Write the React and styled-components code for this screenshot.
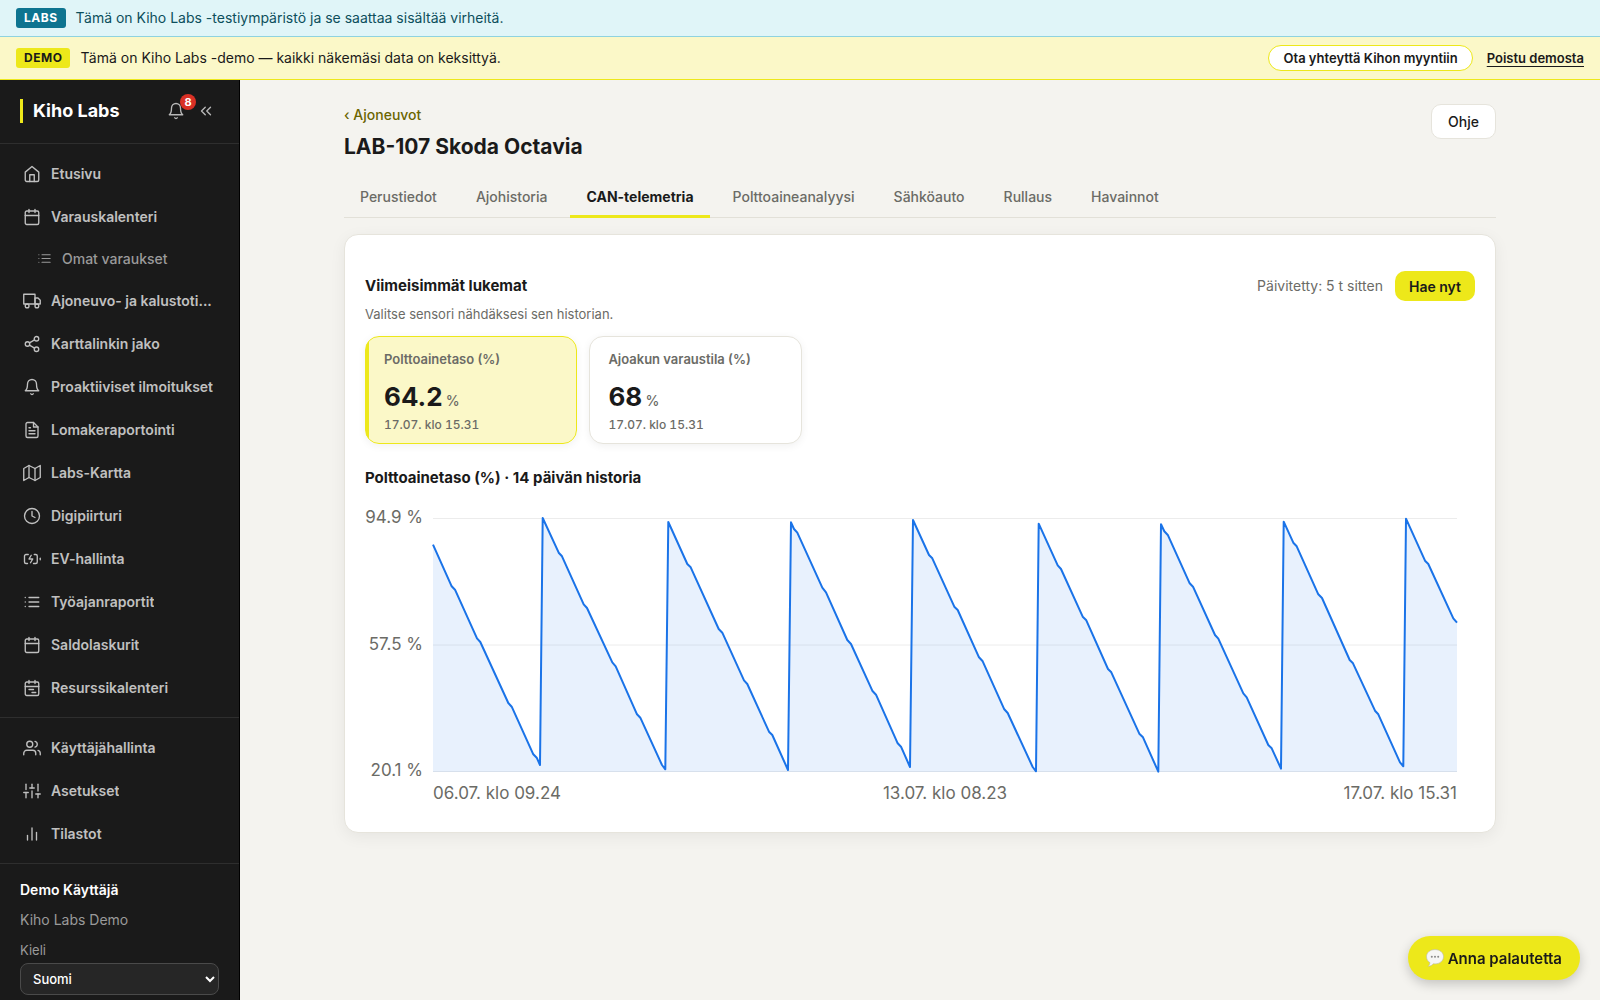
import React from "react";
import styled, { createGlobalStyle } from "styled-components";
import {
  FiBell,
  FiBarChart2,
  FiCalendar,
  FiChevronsLeft,
  FiClock,
  FiFileText,
  FiList,
  FiMap,
  FiShare2,
  FiSliders,
  FiTruck,
  FiUsers
} from "react-icons/fi";

const svgProps = {
  viewBox: "0 0 24 24",
  fill: "none",
  stroke: "currentColor",
  strokeWidth: 2,
  strokeLinecap: "round",
  strokeLinejoin: "round",
  "aria-hidden": true
};

const HomeIcon = () => (
  <svg {...svgProps}>
    <path d="M3 9.500 12 2l9 7.500V20a2 2 0 0 1-2 2H5a2 2 0 0 1-2-2z" />
    <path d="M9 22V13h6v9" />
  </svg>
);

const BatteryIcon = () => (
  <svg {...svgProps}>
    <path d="M7 6H4a2 2 0 0 0-2 2v8a2 2 0 0 0 2 2h2" />
    <path d="M15 6h2a2 2 0 0 1 2 2v8a2 2 0 0 1-2 2h-3" />
    <path d="m11 7-3 5h5l-3 5" />
    <path d="M23 11v2" />
  </svg>
);

const ScheduleIcon = () => (
  <svg {...svgProps}>
    <rect x="3" y="4" width="18" height="18" rx="2" />
    <path d="M8 2v4M16 2v4M3 10h18M8 14h6M12 18h5" />
  </svg>
);

const mainLinks = [
  { label: "Etusivu", icon: HomeIcon },
  { label: "Varauskalenteri", icon: FiCalendar },
  { label: "Omat varaukset", icon: FiList, sub: true },
  { label: "Ajoneuvo- ja kalustoti...", icon: FiTruck },
  { label: "Karttalinkin jako", icon: FiShare2 },
  { label: "Proaktiiviset ilmoitukset", icon: FiBell },
  { label: "Lomakeraportointi", icon: FiFileText },
  { label: "Labs-Kartta", icon: FiMap },
  { label: "Digipiirturi", icon: FiClock },
  { label: "EV-hallinta", icon: BatteryIcon },
  { label: "Työajanraportit", icon: FiList },
  { label: "Saldolaskurit", icon: FiCalendar },
  { label: "Resurssikalenteri", icon: ScheduleIcon }
];

const adminLinks = [
  { label: "Käyttäjähallinta", icon: FiUsers },
  { label: "Asetukset", icon: FiSliders },
  { label: "Tilastot", icon: FiBarChart2 }
];

const tabs = [
  "Perustiedot",
  "Ajohistoria",
  "CAN-telemetria",
  "Polttoaineanalyysi",
  "Sähköauto",
  "Rullaus",
  "Havainnot"
];

const sensors = [
  { name: "Polttoainetaso (%)", value: "64.2", time: "17.07. klo 15.31" },
  { name: "Ajoakun varaustila (%)", value: "68", time: "17.07. klo 15.31" }
];

// fuel level, chart units: one line per tank
const linePoints = [
  "68,44.7 86.7,86.3 90,89.7 112,138.3 115.3,142 143.3,203 146.7,206.7 168.3,254.3 171.7,257.7 175,265",
  "177.7,18 193.7,52.7 197,56.3 218.7,104.3 222,108 247.3,162.3 250.7,166.3 272,214.3 275.3,217.7 297,265 300.3,269.3",
  "303.3,22 322.3,64 325.7,67.3 353.7,129 357.3,132.7 379,180.3 382.3,184 404,231.7 407.3,235 423,270",
  "426,22.3 429,29 432.3,32.7 457.3,87.7 461,92.3 482.3,140 486,144 507.3,190.7 511,194.7 532.7,243.3 536,246.7 545,267",
  "548,20 564,55 567.3,58.3 589.3,106.7 592.7,110 614,157.3 617.7,161.3 639.3,209.3 642.7,213 667.7,267 671,271.3",
  "673.7,23.7 692.7,65.3 696,69 717.7,116.7 721.3,120.3 743,169 746.3,172.3 774.3,233.7 778,237.3 793.3,271.7",
  "796,24.3 799.3,31.3 803,35.3 824.7,83.3 828,86.7 850,135 853.3,138.7 878.3,193.3 881.7,197.3 903.3,245 906.7,248.3 916,268.7",
  "918.7,21.7 928.3,42.7 931.7,46.3 953.3,94.3 957,98 984.7,160 988,163.3 1010,210.7 1013.3,214.3 1035,262.3 1038.3,266.3",
  "1041,18.7 1060,60.7 1063.3,64 1088.3,118.3 1092,122.7"
].join(" ");

const NavGroup = ({ links }) => (
  <NavList>
    {links.map(({ label, icon: Icon, sub }) => (
      <li key={label}>
        <NavLink href="#" $sub={sub}>
          <Icon />
          <span>{label}</span>
        </NavLink>
      </li>
    ))}
  </NavList>
);

const HistoryChart = () => (
  <Chart viewBox="0 0 1110 312" role="img" aria-label="Polttoainetaso (%)">
    <line x1="68" x2="1092" y1="18.5" y2="18.5" />
    <line x1="68" x2="1092" y1="145" y2="145" />
    <line x1="68" x2="1092" y1="271.5" y2="271.5" />
    <polygon points={`68,272 ${linePoints} 1092,272`} />
    <polyline points={linePoints} />
    <text x="58" y="23" textAnchor="end">94.9 %</text>
    <text x="58" y="150" textAnchor="end">57.5 %</text>
    <text x="58" y="276" textAnchor="end">20.1 %</text>
    <text x="68" y="299">06.07. klo 09.24</text>
    <text x="580" y="299" textAnchor="middle">13.07. klo 08.23</text>
    <text x="1092" y="299" textAnchor="end">17.07. klo 15.31</text>
  </Chart>
);

const BubbleIcon = () => (
  <svg width="18" height="18" viewBox="0 0 18 18" aria-hidden="true">
    <path
      d="M9 .6C4.200.6.5 3.600.5 7.700c0 2.500 1.300 4.600 3.400 5.900 0 1.500-.7 2.700-1.700 3.700 2.200 0 3.900-1 5-2.500.6.100 1.200.1 1.800.1 4.800 0 8.500-3.100 8.500-7.200S13.800.6 9 .6z"
      fill="#f6f6f4"
      stroke="#b9b9a8"
      strokeWidth=".6"
    />
    <circle cx="5.800" cy="7.800" r="1" fill="#8a8a8a" />
    <circle cx="9" cy="7.800" r="1" fill="#8a8a8a" />
    <circle cx="12.200" cy="7.800" r="1" fill="#8a8a8a" />
  </svg>
);

const App = () => (
  <Page>
    <GlobalStyle />
    <LabsBanner>
      <Tag $labs>LABS</Tag>
      <span>Tämä on Kiho Labs -testiympäristö ja se saattaa sisältää virheitä.</span>
    </LabsBanner>
    <DemoBanner>
      <Tag>DEMO</Tag>
      <span>Tämä on Kiho Labs -demo — kaikki näkemäsi data on keksittyä.</span>
      <BannerActions>
        <SalesLink href="#">Ota yhteyttä Kihon myyntiin</SalesLink>
        <ExitLink href="#">Poistu demosta</ExitLink>
      </BannerActions>
    </DemoBanner>
    <Body>
      <Sidebar>
        <Brand>
          <h2>Kiho Labs</h2>
          <IconButton aria-label="Ilmoitukset">
            <FiBell size={18} strokeWidth={1.8} />
            <Count>8</Count>
          </IconButton>
          <IconButton aria-label="Pienennä valikko">
            <FiChevronsLeft size={18} strokeWidth={1.8} />
          </IconButton>
        </Brand>
        <nav>
          <NavGroup links={mainLinks} />
          <NavGroup links={adminLinks} />
        </nav>
        <UserPanel>
          <strong>Demo Käyttäjä</strong>
          <span>Kiho Labs Demo</span>
          <label htmlFor="language">Kieli</label>
          <select id="language" defaultValue="fi">
            <option value="fi">Suomi</option>
            <option value="en">English</option>
            <option value="sv">Svenska</option>
          </select>
        </UserPanel>
      </Sidebar>
      <Main>
        <Content>
          <PageHeader>
            <div>
              <BackLink href="#">‹ Ajoneuvot</BackLink>
              <h1>LAB-107 Skoda Octavia</h1>
            </div>
            <HelpButton>Ohje</HelpButton>
          </PageHeader>
          <Tabs role="tablist">
            {tabs.map(tab => (
              <Tab
                key={tab}
                role="tab"
                aria-selected={tab === "CAN-telemetria"}
                $active={tab === "CAN-telemetria"}
              >
                {tab}
              </Tab>
            ))}
          </Tabs>
          <Card>
            <CardHeader>
              <h2>Viimeisimmät lukemat</h2>
              <span>Päivitetty: 5 t sitten</span>
              <FetchButton>Hae nyt</FetchButton>
            </CardHeader>
            <Hint>Valitse sensori nähdäksesi sen historian.</Hint>
            <SensorGrid>
              {sensors.map((sensor, i) => (
                <Sensor key={sensor.name} $active={i === 0}>
                  <SensorName>{sensor.name}</SensorName>
                  <SensorValue>
                    {sensor.value} <small>%</small>
                  </SensorValue>
                  <SensorTime>{sensor.time}</SensorTime>
                </Sensor>
              ))}
            </SensorGrid>
            <ChartTitle>Polttoainetaso (%) · 14 päivän historia</ChartTitle>
            <HistoryChart />
          </Card>
        </Content>
      </Main>
    </Body>
    <Feedback>
      <BubbleIcon />
      Anna palautetta
    </Feedback>
  </Page>
);

export default App;

const GlobalStyle = createGlobalStyle`
  * {
    box-sizing: border-box;
  }

  body {
    margin: 0;
    background: #f4f3ef;
    color: #1a1a1a;
    font-family: Inter, "Liberation Sans", sans-serif;
    font-size: 14px;
    line-height: 20px;
  }

  h1,
  h2,
  h3,
  p,
  ul {
    margin: 0;
    padding: 0;
  }

  button,
  select {
    font-family: inherit;
    cursor: pointer;
  }
`;

const Page = styled.div`
  display: flex;
  flex-direction: column;
  height: 100vh;
  overflow: hidden;
`;

const Banner = styled.div`
  display: flex;
  flex-shrink: 0;
  align-items: center;
  gap: 10px;
  padding: 8px 16px;
  font-size: 14px;
`;

const LabsBanner = styled(Banner)`
  background: #e0f5f8;
  border-bottom: 1px solid #8fd3df;
  color: #0d4f5c;
`;

const DemoBanner = styled(Banner)`
  background: #fbf8c8;
  border-bottom: 1px solid #ede81a;
`;

const Tag = styled.span`
  padding: 0 8px;
  border-radius: 3px;
  background: ${props => (props.$labs ? "#0e7490" : "#ede81a")};
  color: ${props => (props.$labs ? "#fff" : "#1a1a1a")};
  font-size: 12px;
  font-weight: 700;
  letter-spacing: 0.5px;
`;

const BannerActions = styled.div`
  display: flex;
  align-items: center;
  gap: 14px;
  margin-left: auto;
  font-size: 13px;
  font-weight: 600;
`;

const SalesLink = styled.a`
  padding: 2px 14px;
  border: 1px solid #ede81a;
  border-radius: 999px;
  background: #fff;
  color: #1a1a1a;
  text-decoration: none;
`;

const ExitLink = styled.a`
  color: #1a1a1a;
  text-underline-offset: 3px;
`;

const Body = styled.div`
  display: flex;
  flex: 1;
  min-height: 0;
`;

const Sidebar = styled.aside`
  flex: 0 0 240px;
  border-right: 1px solid #000;
  background: #1a1a1a;
  overflow: hidden;
`;

const Brand = styled.div`
  display: flex;
  align-items: center;
  gap: 8px;
  height: 64px;
  padding: 0 22px 2px 20px;
  border-bottom: 1px solid #2e2e2e;

  h2 {
    flex: 1;
    padding-left: 10px;
    border-left: 3px solid #ede81a;
    color: #fff;
    font-size: 18px;
    line-height: 24px;
  }
`;

const IconButton = styled.button`
  position: relative;
  display: flex;
  padding: 2px;
  border: 0;
  background: none;
  color: #b8b8b8;
`;

const Count = styled.span`
  position: absolute;
  top: -6px;
  right: -9px;
  width: 16px;
  border-radius: 8px;
  background: #d93025;
  color: #fff;
  font-size: 11px;
  font-weight: 700;
  line-height: 16px;
  text-align: center;
`;

const NavList = styled.ul`
  padding: 8px 0;
  border-bottom: 1px solid #2e2e2e;
  list-style: none;
`;

const NavLink = styled.a`
  display: flex;
  align-items: center;
  gap: 10px;
  height: ${props => (props.$sub ? "41px" : "43px")};
  padding: 0 16px 0 ${props => (props.$sub ? "37px" : "23px")};
  color: ${props => (props.$sub ? "#9a9a9a" : "#c0c0c0")};
  font-size: 14px;
  font-weight: ${props => (props.$sub ? 500 : 600)};
  text-decoration: none;

  svg {
    flex: none;
    width: ${props => (props.$sub ? "15px" : "18px")};
    height: ${props => (props.$sub ? "15px" : "18px")};
    stroke-width: 1.8;
  }

  span {
    overflow: hidden;
    text-overflow: ellipsis;
    white-space: nowrap;
  }
`;

const UserPanel = styled.div`
  display: flex;
  flex-direction: column;
  padding: 16px 20px;
  color: #9a9a9a;

  strong {
    color: #fff;
    font-weight: 600;
  }

  span {
    margin: 10px 0;
  }

  label {
    margin-bottom: 3px;
    font-size: 13px;
  }

  select {
    height: 32px;
    padding: 0 8px;
    border: 1px solid #4a4a4a;
    border-radius: 8px;
    background: #262626;
    color: #fff;
    font-size: 13px;
    font-weight: 500;
  }
`;

const Main = styled.main`
  flex: 1;
  min-width: 0;
  overflow: hidden;
`;

const Content = styled.div`
  max-width: 1200px;
  margin: 0 auto;
  padding: 24px;
`;

const PageHeader = styled.header`
  display: flex;
  align-items: flex-start;
  justify-content: space-between;

  h1 {
    margin-top: 8px;
    font-size: 21px;
    line-height: 28px;
  }
`;

const BackLink = styled.a`
  display: block;
  padding-top: 1px;
  color: #6b6500;
  font-weight: 500;
  text-decoration: none;
`;

const HelpButton = styled.button`
  height: 35px;
  padding: 0 16px;
  border: 1px solid #e6e4dc;
  border-radius: 10px;
  background: #fff;
  color: #1a1a1a;
  font-size: 14px;
  font-weight: 500;
`;

const Tabs = styled.div`
  display: flex;
  gap: 7px;
  margin: 16px 0;
  border-bottom: 1px solid #e2e0d8;
`;

const Tab = styled.button`
  margin-bottom: -1px;
  padding: 10px 16px 8px;
  border: 0;
  border-bottom: 3px solid ${props => (props.$active ? "#ede81a" : "transparent")};
  background: none;
  color: ${props => (props.$active ? "#1a1a1a" : "#6b6b66")};
  font-size: 14px;
  font-weight: ${props => (props.$active ? 700 : 500)};
  line-height: 20px;
`;

const Card = styled.section`
  padding: 36px 20px 20px;
  border: 1px solid #e6e4dc;
  border-radius: 14px;
  background: #fff;
  box-shadow: 0 4px 16px rgba(0, 0, 0, 0.06);
`;

const CardHeader = styled.div`
  display: flex;
  align-items: center;
  gap: 12px;

  h2 {
    flex: 1;
    font-size: 15px;
    font-weight: 700;
  }

  span {
    color: #6b6b66;
    font-size: 14px;
  }
`;

const FetchButton = styled.button`
  height: 30px;
  padding: 0 14px;
  border: 0;
  border-radius: 10px;
  background: #ede81a;
  color: #1a1a1a;
  font-size: 14px;
  font-weight: 600;
`;

const Hint = styled.p`
  margin: 3px 0 12px;
  color: #6b6b66;
  font-size: 13px;
`;

const SensorGrid = styled.div`
  display: grid;
  grid-template-columns: repeat(auto-fill, minmax(200px, 1fr));
  gap: 12px;
`;

const Sensor = styled.button`
  display: flex;
  flex-direction: column;
  height: 108px;
  padding: 12px 18px;
  border: 1px solid ${props => (props.$active ? "#ede81a" : "#e6e4dc")};
  border-radius: 14px;
  background: ${props =>
    props.$active ? "linear-gradient(90deg, #ede81a 3px, #fbf8c8 3px)" : "#fff"};
  box-shadow: 0 2px 8px rgba(0, 0, 0, 0.06);
  color: #6b6b66;
  text-align: left;
`;

const SensorName = styled.span`
  font-size: 13px;
  font-weight: 600;
  line-height: 20px;
`;

const SensorValue = styled.span`
  margin-top: 12px;
  color: #1a1a1a;
  font-size: 26px;
  font-weight: 700;
  line-height: 32px;

  small {
    margin-left: -3px;
    color: #6b6b66;
    font-size: 14px;
    font-weight: 500;
  }
`;

const SensorTime = styled.span`
  font-size: 12px;
  font-weight: 500;
  font-variant-numeric: tabular-nums;
  line-height: 16px;
`;

const ChartTitle = styled.h3`
  margin: 24px 0 12px;
  font-size: 15px;
  font-weight: 700;
`;

const Chart = styled.svg`
  display: block;
  width: 100%;

  line {
    stroke: #ececec;
  }

  polygon {
    fill: rgba(26, 115, 232, 0.1);
  }

  polyline {
    fill: none;
    stroke: #1a73e8;
    stroke-width: 2;
    stroke-linejoin: round;
  }

  text {
    fill: #6b6b66;
    font-size: 17px;
  }
`;

const Feedback = styled.button`
  position: fixed;
  right: 20px;
  bottom: 20px;
  display: flex;
  align-items: center;
  gap: 4px;
  height: 44px;
  padding: 0 18px;
  border: 0;
  border-radius: 22px;
  background: #ede81a;
  box-shadow: 0 4px 12px rgba(0, 0, 0, 0.2);
  color: #1a1a1a;
  font-size: 15px;
  font-weight: 600;
`;
